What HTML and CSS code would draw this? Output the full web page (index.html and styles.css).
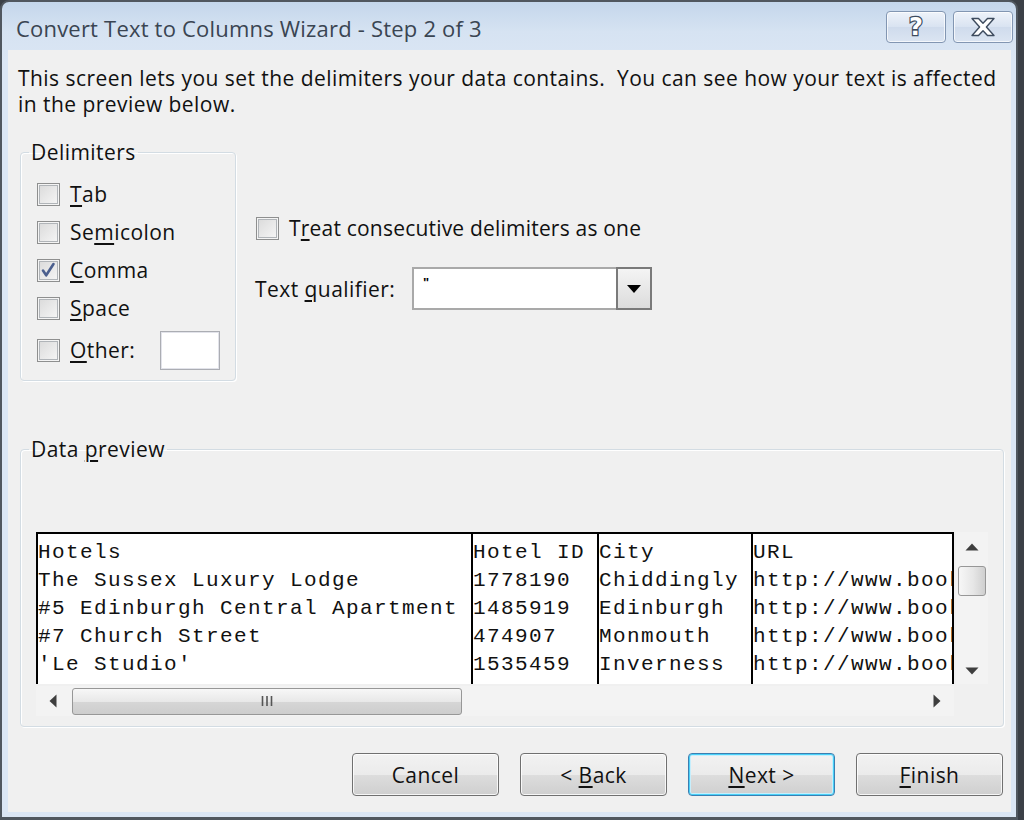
FILE: index.html
```html
<!DOCTYPE html>
<html lang="en">
<head>
<meta charset="utf-8">
<title>Convert Text to Columns Wizard - Step 2 of 3</title>
<link rel="stylesheet" href="styles.css">
</head>
<body>
<div class="window">
  <div class="titlebar">
    <span class="title">Convert Text to Columns Wizard - Step 2 of 3</span>
    <div class="caption-btns">
      <div class="cap-btn">
        <svg width="24" height="26" viewBox="0 0 24 26"><text x="12" y="21" text-anchor="middle" class="help-glyph">?</text></svg>
      </div>
      <div class="cap-btn">
        <svg width="26" height="20" viewBox="0 0 26 20"><path d="M2 1.5h6.5l4.5 4.8 4.5-4.8h6.5l-7.6 8.5 7.6 8.5h-6.5l-4.5-4.8-4.5 4.8h-6.5l7.6-8.5z" fill="#fff" stroke="#3d4b5e" stroke-width="1.4" stroke-linejoin="round"/></svg>
      </div>
    </div>
  </div>
  <div class="client">
    <p class="intro">This screen lets you set the delimiters your data contains.&nbsp; You can see how your text is affected<br>in the preview below.</p>

    <div class="options">
      <fieldset class="group delims">
        <legend>Delimiters</legend>
        <div class="chk-row"><span class="cbox"></span><span class="lbl"><u>T</u>ab</span></div>
        <div class="chk-row"><span class="cbox"></span><span class="lbl">Se<u>m</u>icolon</span></div>
        <div class="chk-row"><span class="cbox checked"><svg width="21" height="21" viewBox="0 0 21 21"><path d="M5 10.5l3.2 4.8L15.5 4" fill="none" stroke="#4b5f8e" stroke-width="2.6" stroke-linecap="round" stroke-linejoin="round"/></svg></span><span class="lbl"><u>C</u>omma</span></div>
        <div class="chk-row"><span class="cbox"></span><span class="lbl"><u>S</u>pace</span></div>
        <div class="chk-row other"><span class="cbox"></span><span class="lbl"><u>O</u>ther:</span><span class="other-box"></span></div>
      </fieldset>

      <div class="right-opts">
        <div class="chk-row consec"><span class="cbox"></span><span class="lbl">T<u>r</u>eat consecutive delimiters as one</span></div>
        <div class="qual-row">
          <span class="qual-lbl">Text <u>q</u>ualifier:</span>
          <div class="combo">
            <span class="combo-val">"</span>
            <span class="combo-btn"><svg width="16" height="10" viewBox="0 0 16 10"><path d="M1 1h14L8 9z" fill="#000"/></svg></span>
          </div>
        </div>
      </div>
    </div>

    <fieldset class="group preview">
      <legend>Data <u>p</u>review</legend>
      <div class="grid-area">
        <div class="grid-top">
          <div class="table">
            <div class="col c1"><div>Hotels</div><div>The Sussex Luxury Lodge</div><div>#5 Edinburgh Central Apartment</div><div>#7 Church Street</div><div>'Le Studio'</div></div>
            <div class="col c2"><div>Hotel ID</div><div>1778190</div><div>1485919</div><div>474907</div><div>1535459</div></div>
            <div class="col c3"><div>City</div><div>Chiddingly</div><div>Edinburgh</div><div>Monmouth</div><div>Inverness</div></div>
            <div class="col c4"><div>URL</div><div>http://www.booking.com</div><div>http://www.booking.com</div><div>http://www.booking.com</div><div>http://www.booking.com</div></div>
          </div>
          <div class="vscroll">
            <span class="arrow"><svg width="14" height="8" viewBox="0 0 14 8"><path d="M7 0.5L13.5 7.5H0.5z" fill="#3e3e3e"/></svg></span>
            <span class="vthumb"></span>
            <span class="vtrack"></span>
            <span class="arrow"><svg width="14" height="8" viewBox="0 0 14 8"><path d="M0.5 0.5H13.5L7 7.5z" fill="#3e3e3e"/></svg></span>
          </div>
        </div>
        <div class="hscroll">
          <span class="harrow"><svg width="8" height="14" viewBox="0 0 8 14"><path d="M7.5 0.5V13.5L0.5 7z" fill="#3e3e3e"/></svg></span>
          <span class="hthumb"><svg width="12" height="10" viewBox="0 0 12 10"><path d="M1.5 0v10M6 0v10M10.5 0v10" stroke="#555" stroke-width="1.6"/></svg></span>
          <span class="htrack"></span>
          <span class="harrow"><svg width="8" height="14" viewBox="0 0 8 14"><path d="M0.5 0.5V13.5L7.5 7z" fill="#3e3e3e"/></svg></span>
        </div>
      </div>
    </fieldset>

    <div class="buttons">
      <div class="btn">Cancel</div>
      <div class="btn">&lt;&nbsp;<u>B</u>ack</div>
      <div class="btn default"><u>N</u>ext&nbsp;&gt;</div>
      <div class="btn"><u>F</u>inish</div>
    </div>
  </div>
</div>
</body>
</html>
```

FILE: styles.css
```css
* { box-sizing: border-box; }
html, body { margin: 0; padding: 0; }
body {
  width: 1024px;
  height: 820px;
  overflow: hidden;
  background: #3b4047;
  font-family: "Open Sans", "Noto Sans", sans-serif;
  color: #000;
}
u { text-decoration-thickness: 2px; text-underline-offset: 3px; }

.window {
  width: 1018px;
  height: 820px;
  border: 2px solid #50575f;
  border-bottom-width: 3px;
  border-radius: 9px 9px 0 0;
  background: linear-gradient(#c4d6eb 0, #d6e3f2 30px, #dbe6f4 60px, #dbe6f4 100%);
  padding: 0 5px 5px 6px;
  display: flex;
  flex-direction: column;
}

.titlebar {
  height: 48px;
  flex: none;
  display: flex;
  justify-content: space-between;
  align-items: flex-start;
}
.title {
  margin: 11px 0 0 8px;
  font-size: 22px;
  letter-spacing: 0.2px;
  color: #3a4552;
}
.caption-btns {
  display: flex;
  gap: 7px;
  margin: 9px -2px 0 0;
}
.cap-btn {
  width: 60px;
  height: 32px;
  border: 1px solid #8296b2;
  border-radius: 4px;
  background: linear-gradient(#eef3fa, #d9e3f1 50%, #cfdbec 51%, #dbe5f2);
  box-shadow: inset 0 0 0 1px rgba(255,255,255,0.7);
  display: flex;
  align-items: center;
  justify-content: center;
}
.help-glyph {
  font-family: "DejaVu Sans", sans-serif;
  font-weight: bold;
  font-size: 24px;
  fill: #fff;
  stroke: #3d4b5e;
  stroke-width: 2.4px;
  paint-order: stroke fill;
}

.client {
  flex: 1;
  background: #f0f0f0;
  padding: 15px 0 0 10px;
  display: flex;
  flex-direction: column;
  font-size: 21px;
  letter-spacing: 0.45px;
}
.intro {
  margin: 0;
  line-height: 26px;
  color: #111;
}

.options {
  display: flex;
  margin-top: 22px;
}

.group {
  border: 1px solid #d3dce3;
  border-radius: 4px;
  box-shadow: inset 1px 1px 0 #fff, 1px 1px 0 #fff;
  margin: 0;
}
.group legend {
  padding: 0 2px;
  line-height: 26px;
  color: #111;
}
.delims legend { margin-left: -8px; }
.preview legend { margin-left: -7px; }

.delims {
  width: 216px;
  margin-left: 2px;
  padding: 10px 15px 7px 16px;
}
.chk-row {
  height: 38px;
  display: flex;
  align-items: center;
}
.chk-row.other { height: 46px; }
.cbox {
  width: 23px;
  height: 23px;
  flex: none;
  border: 1px solid #8e8f8f;
  box-shadow: inset 0 0 0 1px #f4f4f4, inset 0 0 0 2px #b0b4b8;
  background-image: linear-gradient(135deg, #d9d9d9, #f7f7f7);
  position: relative;
}
.cbox svg { position: absolute; left: 0; top: 0; }
.lbl { margin-left: 10px; color: #111; white-space: nowrap; }
.other-box {
  width: 60px;
  height: 39px;
  margin-left: auto;
  background: #fff;
  border: 1px solid #abadb3;
  box-shadow: inset 0 0 0 1px #e2e3ea;
}

.right-opts {
  margin-left: 20px;
  padding-top: 70px;
  display: flex;
  flex-direction: column;
}
.consec .lbl { letter-spacing: 0.2px; }
.qual-row {
  margin-top: 20px;
  display: flex;
  align-items: center;
  margin-left: -1px;
}
.qual-lbl { width: 157px; color: #111; }
.combo {
  width: 240px;
  height: 43px;
  background: #fff;
  border: 2px solid #a9a9a9;
  display: flex;
  align-items: stretch;
}
.combo-val {
  flex: 1;
  font-size: 13px;
  font-weight: bold;
  padding: 4px 0 0 9px;
  color: #000;
}
.combo-btn {
  width: 36px;
  border: 2px solid #7a7a7a;
  margin: -2px -2px -2px 0;
  background: linear-gradient(#f4f4f4, #dcdcdc);
  display: flex;
  align-items: center;
  justify-content: center;
}

.preview {
  width: 982px;
  margin: 55px 0 0 2px;
  padding: 70px 15px 10px 15px;
}
.grid-area { display: flex; flex-direction: column; }
.grid-top { display: flex; }
.table {
  width: 918px;
  height: 152px;
  background: #fff;
  border-top: 2px solid #000;
  display: flex;
  overflow: hidden;
  font-family: "Liberation Mono", "Courier New", monospace;
  font-size: 21px;
  letter-spacing: 1.4px;
  line-height: 28px;
  color: #111;
}
.col {
  border-left: 2px solid #000;
  padding-top: 5px;
  white-space: nowrap;
  overflow: hidden;
  flex: none;
}
.c1 { width: 435px; }
.c2 { width: 126px; }
.c3 { width: 154px; }
.c4 { width: 203px; border-right: 2px solid #000; }

.vscroll {
  width: 32px;
  height: 152px;
  margin-left: 2px;
  background: #f3f3f3;
  display: flex;
  flex-direction: column;
  align-items: center;
  padding: 8px 0 6px;
}
.vscroll .arrow { height: 14px; display: flex; align-items: center; }
.vthumb {
  width: 28px;
  height: 30px;
  margin-top: 12px;
  border: 1px solid #979797;
  border-radius: 3px;
  background: linear-gradient(90deg, #f7f7f7, #e6e6e6 55%, #cfcfcf);
}
.vtrack { flex: 1; }

.hscroll {
  width: 918px;
  height: 30px;
  margin-top: 2px;
  background: #f3f3f3;
  display: flex;
  align-items: center;
  padding: 0 12px 0 12px;
}
.harrow { width: 10px; display: flex; justify-content: center; }
.hthumb {
  width: 390px;
  height: 27px;
  margin-left: 14px;
  border: 1px solid #979797;
  border-radius: 3px;
  background: linear-gradient(#f7f7f7, #e8e8e8 50%, #d6d6d6 51%, #cdcdcd);
  display: flex;
  align-items: center;
  justify-content: center;
}
.htrack { flex: 1; }

.buttons {
  display: flex;
  justify-content: flex-end;
  gap: 21px;
  margin: 26px 8px 0 0;
}
.btn {
  width: 147px;
  height: 43px;
  border: 1px solid #707070;
  border-radius: 4px;
  background: linear-gradient(#f2f2f2, #ebebeb 50%, #dddddd 51%, #cfcfcf);
  box-shadow: inset 0 0 0 1px rgba(255,255,255,0.8);
  display: flex;
  align-items: center;
  justify-content: center;
  color: #111;
}
.btn.default {
  border-color: #3c7fb1;
  box-shadow: inset 0 0 0 1px #48d0f8, inset 0 0 0 2px #c6eefc;
}
```
